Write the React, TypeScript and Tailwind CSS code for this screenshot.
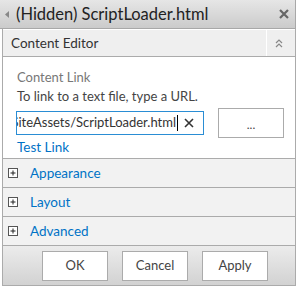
import React from "react";

function PlusBox() {
  return (
    <svg width="10" height="10" viewBox="0 0 10 10" className="shrink-0">
      <rect x="0.5" y="0.5" width="9" height="9" fill="#fff" stroke="#555" />
      <path d="M2.5 5h5M5 2.5v5" stroke="#222" strokeWidth="1" />
    </svg>
  );
}

function Section({ label }: { label: string }) {
  return (
    <div className="h-[29px] flex items-center bg-[#f2f2f2] border-b border-[#ababab] pl-[5px]">
      <PlusBox />
      <span className="ml-[12px] text-[13.5px] text-[#0072c6]">{label}</span>
    </div>
  );
}

export default function App() {
  return (
    <div
      className="w-[303px] h-[294px] bg-white overflow-hidden"
      style={{ fontFamily: 'Lato, "Open Sans", sans-serif' }}
    >
      <div className="w-[296px]">
        {/* header */}
        <div className="h-[29px] flex items-center bg-gradient-to-b from-[#e6e6e6] to-[#cbcbcb] border-b border-r border-[#a8a8a8]">
          <svg width="4" height="7" viewBox="0 0 4 7" className="ml-[5px]">
            <path d="M4 0L0 3.5L4 7z" fill="#888" />
          </svg>
          <span className="ml-[7px] text-[16.5px] text-[#222]">(Hidden) ScriptLoader.html</span>
          <svg width="10" height="10" viewBox="0 0 10 10" className="ml-auto mr-[6px]">
            <path d="M1 1L9 9M9 1L1 9" stroke="#666" strokeWidth="2.2" />
          </svg>
        </div>
        {/* body */}
        <div className="ml-[2px] border-l border-r border-[#ababab]">
          <div className="flex h-[28px] border-b border-[#ababab] pt-[1px]">
            <div className="flex-1 bg-[#efefef] flex items-center pl-[8px] text-[13.5px] text-[#333]">
              Content Editor
            </div>
            <div className="w-[28px] ml-[1px] bg-[#efefef] flex items-center justify-center">
              <svg width="8" height="9" viewBox="0 0 8 9" className="mr-[5px]">
                <path d="M1 4L4 1L7 4M1 8L4 5L7 8" stroke="#888" strokeWidth="1.2" fill="none" />
              </svg>
            </div>
          </div>
          <div className="pl-[13px] pt-[11px] h-[102px] border-b border-[#ababab]">
            <div className="pl-[1px] text-[13px] leading-[19px] text-[#777]">Content Link</div>
            <div className="pl-[1px] text-[13px] leading-[19px] text-[#444]">To link to a text file, type a URL.</div>
            <div className="flex items-center mt-[2px]">
              <div className="w-[188px] h-[24px] border border-[#2a8dd4] flex items-center overflow-hidden">
                <div className="flex-1 overflow-hidden whitespace-nowrap flex justify-end">
                  <span className="text-[13px] text-[#333]">SiteAssets/ScriptLoader.html</span>
                </div>
                <div className="w-[1px] h-[16px] bg-black shrink-0 ml-[1px]" />
                <svg width="10" height="10" viewBox="0 0 10 10" className="ml-[6px] mr-[9px] shrink-0">
                  <path d="M1 1L9 9M9 1L1 9" stroke="#333" strokeWidth="1.6" />
                </svg>
              </div>
              <div className="ml-[14px] w-[66px] h-[30px] border border-[#ababab] flex items-center justify-center text-[12px] text-[#444] pt-[3px]">
                ...
              </div>
            </div>
            <div className="pl-[1px] text-[13.5px] text-[#0072c6] leading-[18px]">Test Link</div>
          </div>
          <Section label="Appearance" />
          <Section label="Layout" />
          <Section label="Advanced" />
          <div className="h-[40px] bg-gradient-to-b from-[#ececec] to-[#d2d2d2] border-b border-[#ababab] flex items-center pl-[39px] gap-[14px]">
            {["OK", "Cancel", "Apply"].map((t) => (
              <div
                key={t}
                className="w-[66px] h-[30px] bg-white border border-[#ababab] flex items-center justify-center text-[13px] text-[#444]"
              >
                {t}
              </div>
            ))}
          </div>
        </div>
      </div>
    </div>
  );
}
